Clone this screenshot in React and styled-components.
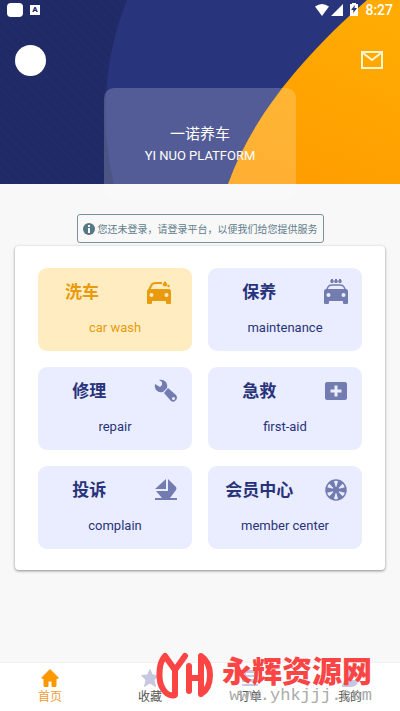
import React from "react";
import styled, { createGlobalStyle } from "styled-components";

const GlobalStyle = createGlobalStyle`
  * {
    box-sizing: border-box;
  }
  body {
    margin: 0;
    background: #f8f8f8;
    font-family: Roboto, "Noto Sans CJK SC", sans-serif;
  }
  button {
    border: 0;
    padding: 0;
    background: none;
    font-family: inherit;
    cursor: pointer;
  }
`;

const HeroArt = () => (
  <Art viewBox="0 0 400 184" preserveAspectRatio="none" aria-hidden="true">
    <defs>
      <pattern
        id="stripes"
        width="7"
        height="7"
        patternUnits="userSpaceOnUse"
        patternTransform="rotate(-45)"
      >
        <rect width="7" height="7" fill="#202a66" />
        <rect width="1" height="7" fill="#242d67" />
      </pattern>
      <linearGradient id="sun" x1="0.2" y1="1" x2="0.6" y2="0">
        <stop offset="0" stopColor="#ff9c00" />
        <stop offset="1" stopColor="#ffab03" />
      </linearGradient>
    </defs>
    <rect width="400" height="184" fill="url(#stripes)" />
    <path d="M127 0C109 44 96 112 114 184H400V0Z" fill="#28347c" />
    <path d="M367 0C302 57 252 117 228 184H400V0Z" fill="url(#sun)" />
  </Art>
);

const CarBody = () => (
  <path
    fillRule="evenodd"
    d="M1 13q0-3 2-3h20q2 0 2 3v11q0 1-1 1h-3q-1 0-1-1v-2H6v2q0 1-1 1H2q-1 0-1-1ZM5.500 14a2 2 0 1 0 0 4 2 2 0 0 0 0-4ZM20.500 14a2 2 0 1 0 0 4 2 2 0 0 0 0-4Z"
  />
);

const WashIcon = () => (
  <svg width="26" height="26" viewBox="0 0 26 26" fill="currentColor">
    <CarBody />
    <path
      d="M3 11 5 7q1-3 5-3h6"
      fill="none"
      stroke="currentColor"
      strokeWidth="2"
    />
    <path d="M19 2q-3 3-2 4.500 2 2 4 0Q22 5 19 2Z" />
    <circle cx="22.500" cy="7" r="1.200" />
  </svg>
);

const TaxiIcon = () => (
  <svg width="26" height="26" viewBox="0 0 26 26" fill="currentColor">
    <CarBody />
    <path
      d="M3 12 5 8q1-2 4-2h8q3 0 4 2l2 4"
      fill="none"
      stroke="currentColor"
      strokeWidth="1.500"
    />
    <path d="M8 0h2v1l1 1-1 2H8L7 2l1-1ZM12 0h2v1l1 1-1 2h-2l-1-2 1-1ZM16 0h2v1l1 1-1 2h-2l-1-2 1-1Z" />
  </svg>
);

const WrenchIcon = () => (
  <svg width="24" height="24" viewBox="0 0 24 24" fill="currentColor">
    <path d="M1 5l5 3 2-2 0-3-3-2q4-1 7 2 2 3 1 6l-4 4Q5 14 2 11 0 8 1 5Z" />
    <path
      fillRule="evenodd"
      d="M14 9 22 16q2 3 0 5-2 3-5 1l-7-8ZM19.500 18a1.500 1.500 0 1 0 0 3 1.500 1.500 0 0 0 0-3Z"
    />
  </svg>
);

const AidIcon = () => (
  <svg width="24" height="24" viewBox="0 0 24 24" fill="currentColor">
    <path
      fillRule="evenodd"
      d="M3 3h18q2 0 2 2v14q0 2-2 2H3q-2 0-2-2V5q0-2 2-2ZM10.500 6.500v4h-4v3h4v4h3v-4h4v-3h-4v-4Z"
    />
  </svg>
);

const BoatIcon = () => (
  <svg width="24" height="24" viewBox="0 0 24 24" fill="currentColor">
    <path d="M12 1v10H1ZM14 1l8 8q1 1 0 3l-6 8H8l-6-7h12ZM1 20h22v2H1Z" />
  </svg>
);

const WheelIcon = () => (
  <svg width="24" height="24" viewBox="0 0 24 24" fill="currentColor">
    <circle
      cx="12"
      cy="12"
      r="10"
      fill="none"
      stroke="currentColor"
      strokeWidth="1.500"
    />
    <circle cx="12" cy="12" r="3.300" />
    {[30, 90, 150, 210, 270, 330].map((angle) => (
      <path
        key={angle}
        d="M11 10 9 2h6l-2 8Z"
        transform={`rotate(${angle} 12 12)`}
      />
    ))}
  </svg>
);

const HomeIcon = () => (
  <svg width="20" height="20" viewBox="0 0 20 20" fill="currentColor">
    <path
      d="M10 1.500 18 9.500q.5 1-1 1h-1V18q0 .5-1 .5h-3V14q0-1-1-1H9q-1 0-1 1v4.500H5q-1 0-1-.5v-7.500H3q-1.500 0-1-1Z"
      stroke="currentColor"
      strokeLinejoin="round"
    />
  </svg>
);

const StarIcon = () => (
  <svg width="20" height="20" viewBox="0 0 20 20" fill="currentColor">
    <path
      d="m10 1.500 2.500 5.500 6 .5-4.500 4.500 1.500 6.500-5.500-3.500-5.500 3.500L6 12 1.500 7.500l6-.5Z"
      stroke="currentColor"
      strokeLinejoin="round"
    />
  </svg>
);

const OrderIcon = () => (
  <svg width="20" height="20" viewBox="0 0 20 20" fill="currentColor">
    <path
      fillRule="evenodd"
      d="M3 2h14q1 0 1 1v11H2V3q0-1 1-1ZM6 5v2h8V5ZM6 9v2h8V9ZM2 16h16v1q0 1-1 1H3q-1 0-1-1Z"
    />
  </svg>
);

const UserIcon = () => (
  <svg width="20" height="20" viewBox="0 0 20 20" fill="currentColor">
    <circle cx="10" cy="6" r="5" />
    <path d="M2 19q0-7 7-7h9q0 7-7 7Z" />
  </svg>
);

const services = [
  { title: "洗车", label: "car wash", icon: <WashIcon />, active: true },
  { title: "保养", label: "maintenance", icon: <TaxiIcon /> },
  { title: "修理", label: "repair", icon: <WrenchIcon /> },
  { title: "急救", label: "first-aid", icon: <AidIcon /> },
  { title: "投诉", label: "complain", icon: <BoatIcon /> },
  { title: "会员中心", label: "member center", icon: <WheelIcon /> },
];

const tabs = [
  { label: "首页", icon: <HomeIcon />, active: true },
  { label: "收藏", icon: <StarIcon /> },
  { label: "订单", icon: <OrderIcon /> },
  { label: "我的", icon: <UserIcon /> },
];

export default function App() {
  return (
    <Page>
      <GlobalStyle />
      <Hero>
        <HeroArt />
        <StatusBar>
          <StatusGroup>
            <AppBadge />
            <LetterBadge>A</LetterBadge>
          </StatusGroup>
          <StatusGroup>
            <svg width="46" height="16" viewBox="0 0 46 16" fill="#fff">
              <path d="M1 4.500q7-5 14 0L8 14ZM17 14 29 2v12Z" />
              <path
                fillRule="evenodd"
                d="M38 1h4v1h2v12h-8V2h2ZM41 3l-4 5h2.500L39 12l4-6h-2.500Z"
              />
            </svg>
            <Clock>8:27</Clock>
          </StatusGroup>
        </StatusBar>
        <TopBar>
          <Avatar aria-label="Profile" />
          <MailButton aria-label="Messages">
            <svg
              width="22"
              height="18"
              viewBox="0 0 22 18"
              fill="none"
              stroke="#fff6d0"
              strokeWidth="2"
            >
              <path d="M1 1h20v16H1ZM2 2l9 7 9-7" />
            </svg>
          </MailButton>
        </TopBar>
        <Brand>
          <span>一诺养车</span>
          <BrandSub>YI NUO PLATFORM</BrandSub>
        </Brand>
      </Hero>
      <Main>
        <Notice>
          <svg width="12" height="12" viewBox="0 0 12 12">
            <circle cx="6" cy="6" r="6" fill="#557786" />
            <path d="M5 2h2v2H5ZM5 5h2v5H5Z" fill="#f8f8f8" />
          </svg>
          您还未登录，请登录平台，以便我们给您提供服务
        </Notice>
        <Panel>
          {services.map((item) => (
            <Tile key={item.label} $active={item.active}>
              <TileHead $active={item.active}>
                <TileTitle>{item.title}</TileTitle>
                <TileIcon $active={item.active}>{item.icon}</TileIcon>
              </TileHead>
              <TileLabel>{item.label}</TileLabel>
            </Tile>
          ))}
        </Panel>
      </Main>
      <TabBar>
        {tabs.map((tab) => (
          <Tab key={tab.label} $active={tab.active}>
            <TabIcon $active={tab.active}>{tab.icon}</TabIcon>
            {tab.label}
          </Tab>
        ))}
      </TabBar>
      <Watermark>
        <svg
          width="58"
          height="50"
          viewBox="0 0 58 50"
          fill="none"
          stroke="#fb4545"
          strokeWidth="6"
          strokeLinecap="round"
          strokeLinejoin="round"
        >
          <path d="M30 5 20 19 10 5C3 12 3 31 8 38Q13 46 20 44V19" />
          <path d="M34 15v25M34 27h11M46 43V5q9 6 9 19 0 14-9 19" />
        </svg>
        <div>
          <MarkName>永辉资源网</MarkName>
          <MarkUrl>www.yhkjjj.com</MarkUrl>
        </div>
      </Watermark>
    </Page>
  );
}

const Page = styled.div`
  position: relative;
  display: flex;
  flex-direction: column;
  min-height: 100vh;
`;

const Hero = styled.header`
  position: relative;
  display: flex;
  flex-direction: column;
  height: 184px;
  color: #fff;
`;

const Art = styled.svg`
  position: absolute;
  inset: 0;
  z-index: -1;
  width: 100%;
  height: 100%;
`;

const StatusBar = styled.div`
  display: flex;
  flex-shrink: 0;
  justify-content: space-between;
  align-items: center;
  height: 20px;
  padding: 0 7px;
`;

const StatusGroup = styled.div`
  display: flex;
  align-items: center;
  gap: 5px;
`;

const AppBadge = styled.span`
  width: 16px;
  height: 14px;
  margin-right: 2px;
  border-radius: 4px;
  background: #fff;
`;

const LetterBadge = styled.span`
  width: 10px;
  height: 10px;
  background: #fff;
  color: #202a65;
  font-size: 8px;
  font-weight: 900;
  line-height: 10px;
  text-align: center;
`;

const Clock = styled.span`
  font-size: 14px;
  font-weight: 500;
  line-height: 20px;
`;

const TopBar = styled.div`
  display: flex;
  flex-shrink: 0;
  justify-content: space-between;
  align-items: center;
  height: 68px;
  padding: 12px 17px 0 15px;
`;

const Avatar = styled.button`
  width: 31px;
  height: 31px;
  border-radius: 50%;
  && {
    background: #fff;
  }
`;

const MailButton = styled.button`
  display: flex;
`;

const Brand = styled.div`
  display: flex;
  flex-direction: column;
  flex-shrink: 0;
  align-items: center;
  justify-content: center;
  align-self: center;
  width: 48%;
  height: 112px;
  border-radius: 10px;
  background: rgba(255, 255, 255, 0.2);
  font-size: 15px;
  line-height: 24px;
`;

const BrandSub = styled.span`
  font-size: 13px;
  line-height: 20px;
`;

const Main = styled.main`
  display: flex;
  flex-direction: column;
  flex: 1;
  gap: 3px;
  padding: 30px 15px;
`;

const Notice = styled.div`
  display: flex;
  align-items: center;
  align-self: center;
  gap: 3px;
  height: 29px;
  padding: 0 5px;
  border: 1px solid #78929e;
  border-radius: 3px;
  color: #607d8b;
  font-size: 10px;
  white-space: nowrap;
`;

const Panel = styled.section`
  display: grid;
  grid-template-columns: 1fr 1fr;
  gap: 16px;
  padding: 22px 23px 21px;
  border-radius: 4px;
  background: #fff;
  box-shadow: 0 1px 3px rgba(0, 0, 0, 0.45);
`;

const Tile = styled.button`
  display: flex;
  flex-direction: column;
  gap: 10px;
  height: 83px;
  && {
    padding-top: 8px;
    background: ${(props) => (props.$active ? "#ffedc1" : "#eaedff")};
  }
  border-radius: 9px;
  color: ${(props) => (props.$active ? "#e99a0e" : "#28337a")};
`;

const TileHead = styled.span`
  display: grid;
  grid-template-columns: ${(props) => (props.$active ? "4fr 3fr" : "2fr 1fr")};
  align-items: center;
  width: 100%;
  height: 32px;
`;

const TileTitle = styled.span`
  font-size: 17px;
  font-weight: 700;
  line-height: 32px;
  white-space: nowrap;
`;

const TileIcon = styled.span`
  display: flex;
  justify-content: center;
  color: ${(props) => (props.$active ? "#e99a0e" : "#737cb1")};
`;

const TileLabel = styled.span`
  width: 100%;
  font-size: 13px;
  line-height: 20px;
`;

const TabBar = styled.nav`
  display: grid;
  grid-template-columns: repeat(4, 1fr);
  height: 49px;
  border-top: 1px solid #f0f0f0;
  background: #fff;
`;

const Tab = styled.button`
  display: flex;
  flex-direction: column;
  align-items: center;
  justify-content: center;
  color: ${(props) => (props.$active ? "#f49b38" : "#555")};
  font-size: 12px;
  line-height: 18px;
`;

const TabIcon = styled.span`
  display: flex;
  color: ${(props) => (props.$active ? "#fb9800" : "#c5c8e0")};
`;

const Watermark = styled.div`
  position: absolute;
  right: 28px;
  bottom: 6px;
  display: flex;
  gap: 9px;
  pointer-events: none;
`;

const MarkName = styled.div`
  color: #fb4545;
  font-family: "Noto Sans CJK SC", sans-serif;
  font-size: 30px;
  font-weight: 900;
  line-height: 36px;
`;

const MarkUrl = styled.div`
  color: #aaa;
  font-family: "Liberation Mono", monospace;
  font-size: 17px;
  line-height: 18px;
  text-align: right;
`;
